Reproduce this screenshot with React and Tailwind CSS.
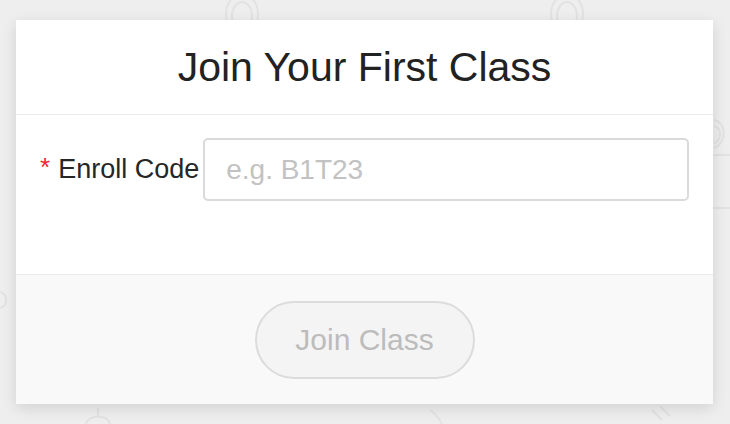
import React from "react";

function Doodles() {
  return (
    <svg className="absolute inset-0" width="730" height="424" viewBox="0 0 730 424" fill="none" stroke="#e2e2e2" strokeWidth="2">
      <ellipse cx="242" cy="14" rx="16" ry="20" />
      <ellipse cx="242" cy="16" rx="10" ry="14" />
      <ellipse cx="567" cy="14" rx="16" ry="20" />
      <ellipse cx="567" cy="16" rx="10" ry="14" />
      <path d="M714 120 C726 122 728 142 714 148" />
      <path d="M714 126 C722 128 722 140 714 143" />
      <path d="M713 155 L730 155" />
      <path d="M713 208 L730 208" />
      <path d="M0 292 C8 294 8 306 0 308" />
      <path d="M98 408 L98 416 M86 424 C88 414 108 414 110 424" />
      <path d="M430 410 C436 414 440 420 442 424" />
      <path d="M652 410 L662 420 M660 406 L670 416" />
    </svg>
  );
}

export default function App() {
  return (
    <div className="relative w-[730px] h-[424px] overflow-hidden bg-[#eeeeee] font-['Liberation_Sans',Arial,sans-serif]">
      <Doodles />
      <div className="relative ml-[16px] pt-[20px]">
        <div className="w-[697px] h-[384px] bg-white flex flex-col shadow-[0_4px_14px_rgba(0,0,0,0.12)]">
          <div className="h-[95px] shrink-0 border-b border-[#ebebeb] flex items-center justify-center">
            <span className="text-[41px] leading-none text-[#222222]">Join Your First Class</span>
          </div>
          <div className="h-[159px] shrink-0 pt-[23px] pl-[24px] flex items-start">
            <div className="h-[63px] flex items-center mr-[4px]">
              <span className="text-[26px] leading-none text-[#f5222d] mr-[8px] -mt-[6px]">*</span>
              <span className="text-[27px] leading-none text-[#262626]">Enroll Code</span>
            </div>
            <input
              className="w-[486px] h-[63px] border-2 border-[#dadada] rounded-[5px] px-[21px] text-[28px] text-[#262626] placeholder:text-[#c2c2c2] outline-none bg-white"
              placeholder="e.g. B1T23"
            />
          </div>
          <div className="flex-1 bg-[#f9f9f9] border-t border-[#ececec] flex items-center justify-center">
            <button className="w-[220px] h-[78px] rounded-full border-2 border-[#dcdcdc] bg-[#f4f4f4] text-[30px] text-[#bcbcbc]">
              Join Class
            </button>
          </div>
        </div>
      </div>
    </div>
  );
}
